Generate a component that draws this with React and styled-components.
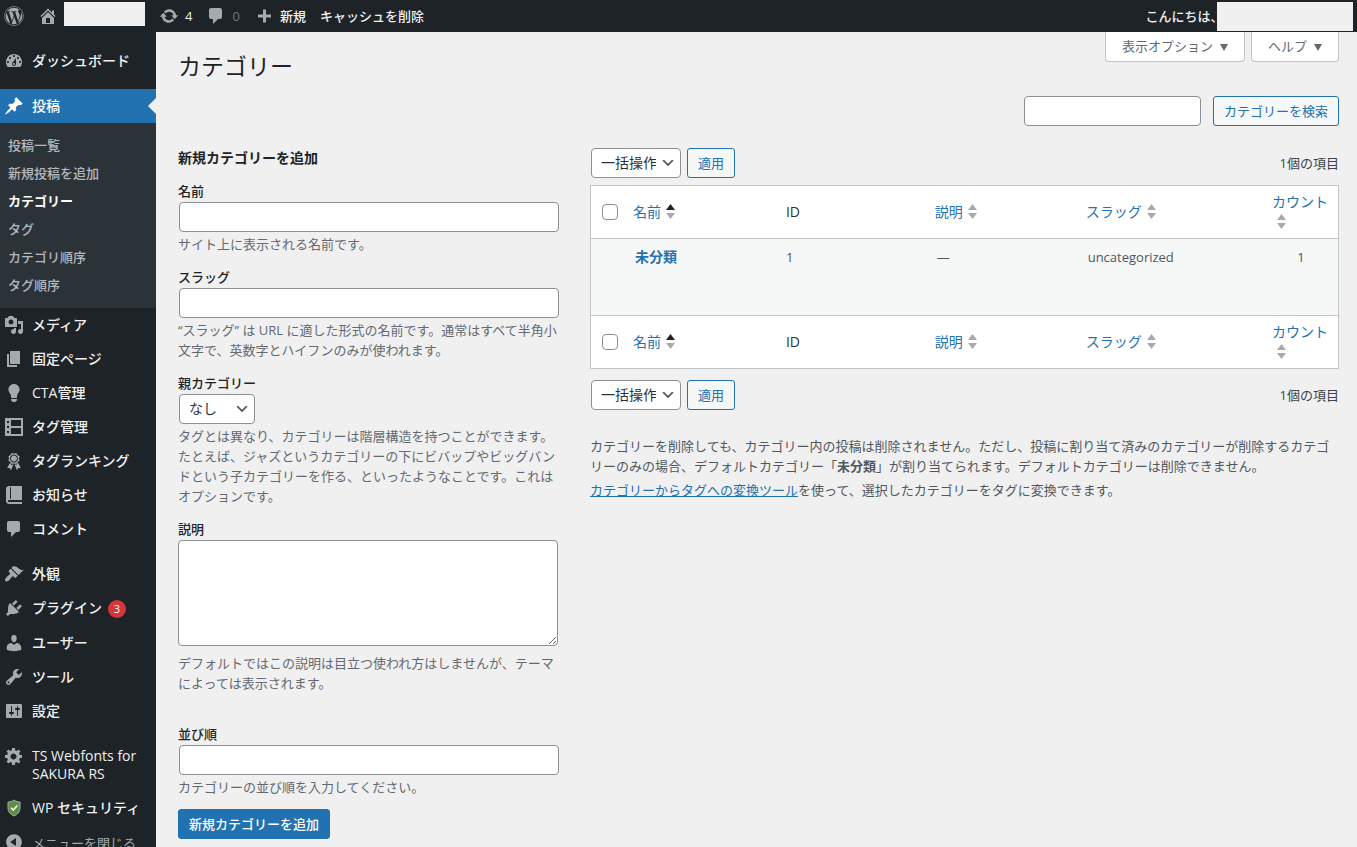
import React from "react";
import styled, { createGlobalStyle, css } from "styled-components";
import { FaWordpress } from "react-icons/fa";

const GlobalStyle = createGlobalStyle`
    *, *::before, *::after {
        box-sizing: border-box;
    }
    body {
        margin: 0;
        background: #f0f0f0;
        color: #3c434a;
        font-family: "Open Sans", "Noto Sans CJK JP", sans-serif;
        font-size: 13px;
        line-height: 20px;
    }
    button, input, select, textarea {
        font-family: inherit;
    }
    a {
        color: #2271b1;
    }
`;

const Shell = styled.div`
    display: flex;
    flex-direction: column;
    height: 100vh;
    overflow: hidden;
`;
const Icon = styled.svg`
    width: 20px;
    height: 20px;
    flex: none;
    fill: #a7aaad;
`;

/* top bar */
const AdminBar = styled.header`
    display: flex;
    flex: none;
    justify-content: space-between;
    height: 32px;
    padding: 0 4px;
    background: #1d2327;
`;
const BarGroup = styled.div`
    display: flex;
    align-items: center;
    gap: ${(props) => props.$gap || 0}px;
`;
const BarLink = styled.a`
    display: flex;
    align-items: center;
    gap: 6px;
    height: 32px;
    color: ${(props) => (props.$muted ? "#72777c" : "#f0f0f1")};
    font-weight: 500;
    font-feature-settings: "halt";
    text-decoration: none;

    ${Icon} {
        fill: #a7aaad;
        color: #a7aaad;
    }
`;
const Mask = styled.span`
    align-self: flex-start;
    width: ${(props) => props.$width}px;
    height: ${(props) => props.$height}px;
    margin-top: 2px;
    background: #f0f0f0;
`;

/* side menu */
const Body = styled.div`
    display: flex;
    flex: 1;
    min-height: 0;
`;
const Side = styled.nav`
    display: flex;
    flex: none;
    flex-direction: column;
    width: 156px;
    padding-top: 12px;
    background: #1d2327;
    overflow: hidden;
`;
const MenuLink = styled.a`
    position: relative;
    display: flex;
    flex: none;
    align-items: flex-start;
    gap: 8px;
    min-height: 34px;
    margin-top: ${(props) => (props.$spaced ? 11 : 0)}px;
    padding: 8px 0 8px 4px;
    color: #f0f0f1;
    font-size: 14px;
    font-weight: 500;
    line-height: 18px;
    text-decoration: none;

    ${Icon} {
        margin: -1px 0;
    }
    ${(props) =>
        props.$active &&
        css`
            background: #2271b1;
            color: #fff;

            ${Icon} {
                fill: #fff;
            }
            &::after {
                content: "";
                position: absolute;
                top: 9px;
                right: 0;
                border: 8px solid transparent;
                border-left: 0;
                border-right-color: #f0f0f0;
            }
        `}
`;
const LatinLabel = styled.span`
    font-weight: 400;
`;
const Bubble = styled.span`
    display: inline-block;
    min-width: 18px;
    margin-left: 6px;
    border-radius: 9px;
    background: #d63638;
    color: #fff;
    font-size: 11px;
    font-weight: 400;
    text-align: center;
`;
const SubMenu = styled.div`
    display: flex;
    flex: none;
    flex-direction: column;
    padding: 8px 0 9px;
    background: #2c3338;
`;
const SubLink = styled.a`
    padding: 4px 8px;
    color: ${(props) => (props.$current ? "#fff" : "#b4b9be")};
    font-weight: ${(props) => (props.$current ? 700 : 500)};
    text-decoration: none;
`;
const Collapse = styled.button`
    display: flex;
    flex: none;
    align-items: center;
    gap: 8px;
    height: 34px;
    padding: 0 0 0 4px;
    border: 0;
    background: none;
    color: #a7aaad;
    font-size: 13px;
    text-align: left;
    white-space: nowrap;
`;

/* content */
const Main = styled.main`
    flex: 1;
    min-width: 0;
    padding: 0 18px 0 22px;
`;
const TopRow = styled.div`
    display: flex;
    align-items: flex-start;
    justify-content: space-between;
    height: 64px;
`;
const Title = styled.h1`
    margin: 0;
    padding-top: 19px;
    color: #1d2327;
    font-size: 23px;
    font-weight: 400;
    line-height: 30px;
`;
const ScreenTabs = styled.div`
    display: flex;
    gap: 6px;
`;
const ScreenTab = styled.button`
    height: 30px;
    padding: 0 16px 2px;
    border: 1px solid #c3c4c7;
    border-top: 0;
    border-radius: 0 0 4px 4px;
    background: #fff;
    color: #646970;
    font-size: 13px;

    &::after {
        content: "";
        display: inline-block;
        margin-left: 7px;
        border: 4px solid transparent;
        border-top: 7px solid #646970;
        border-bottom: 0;
    }
`;
const SearchRow = styled.form`
    display: flex;
    justify-content: flex-end;
    gap: 12px;
    margin-bottom: 22px;
`;
const control = css`
    height: 30px;
    border: 1px solid #8c8f94;
    border-radius: 4px;
    background: #fff;
    color: #2c3338;
    font-size: 14px;
`;
const SearchInput = styled.input`
    ${control}
    width: 177px;
`;
const Button = styled.button`
    height: 30px;
    padding: 0 10px 2px;
    border: 1px solid #2271b1;
    border-radius: 3px;
    background: ${(props) => (props.$primary ? "#2271b1" : "#f6f7f7")};
    color: ${(props) => (props.$primary ? "#fff" : "#2271b1")};
    font-size: 13px;
    font-weight: ${(props) => (props.$primary ? 500 : 400)};
`;
const Columns = styled.div`
    display: grid;
    grid-template-columns: minmax(0, 34fr) minmax(0, 67fr);
    gap: 32px;
    align-items: start;
`;

/* add form */
const AddForm = styled.form`
    display: flex;
    flex-direction: column;
    gap: 12px;
`;
const FormTitle = styled.h2`
    margin: 0;
    color: #1d2327;
    font-size: 14px;
    font-weight: 700;
`;
const Field = styled.div`
    margin-top: ${(props) => (props.$spaced ? 18 : 0)}px;
`;
const Label = styled.label`
    display: block;
    color: #1d2327;
    font-weight: 500;
    line-height: 22px;
`;
const TextInput = styled.input`
    ${control}
    display: block;
    width: 100%;
    margin: 0 1px;
`;
const TextArea = styled.textarea`
    ${control}
    display: block;
    width: 100%;
    height: 106px;
    margin-bottom: 7px;
`;
const Help = styled.p`
    margin: 2px 0 0;
    color: #646970;
`;
const SelectWrap = styled.span`
    position: relative;
    display: inline-block;
    margin: 0 1px;
    vertical-align: top;

    ${Icon} {
        position: absolute;
        top: 7px;
        right: 5px;
        width: 16px;
        height: 16px;
        fill: #50575e;
        pointer-events: none;
    }
`;
const Select = styled.select`
    ${control}
    display: block;
    width: ${(props) => props.$width}px;
    padding: 0 24px 2px 9px;
    appearance: none;
`;

/* list */
const TableNav = styled.div`
    display: flex;
    align-items: center;
    gap: 5px;
`;
const Count = styled.span`
    margin-left: auto;
`;
const Table = styled.table`
    width: 100%;
    margin: 7px 0 11px;
    border: 1px solid #c3c4c7;
    border-spacing: 0;
    table-layout: fixed;
    background: #fff;
    color: #2c3338;
    font-size: 14px;
`;
const HeadCell = styled.th`
    width: ${(props) => props.$width || "auto"};
    height: 53px;
    padding: 0 ${(props) => (props.$plain ? 10 : 8)}px;
    font-weight: 400;
    text-align: left;
    vertical-align: middle;

    thead & {
        border-bottom: 1px solid #c3c4c7;
    }
    tfoot & {
        border-top: 1px solid #c3c4c7;
    }
`;
const CheckCell = styled(HeadCell)`
    padding: 0 0 0 11px;
`;
const CheckBox = styled.input`
    display: block;
    width: 16px;
    height: 16px;
    margin: 0;
    border: 1px solid #8c8f94;
    border-radius: 4px;
    background: #fff;
    appearance: none;
`;
const SortLink = styled.a`
    text-decoration: none;
`;
const Arrows = styled.svg`
    width: 9px;
    height: 15px;
    margin-left: 5px;
    vertical-align: -2px;
    fill: #a7aaad;
`;
const Cell = styled.td`
    height: 76px;
    padding: 8px 10px;
    background: #f6f7f7;
    color: #50575e;
    font-size: 13px;
    text-align: ${(props) => (props.$center ? "center" : "left")};
    vertical-align: top;
`;
const RowTitle = styled.a`
    font-size: 14px;
    font-weight: 700;
    text-decoration: none;
`;
const Notes = styled.div`
    margin-top: 26px;
    color: #50575e;
`;
const Note = styled.p`
    margin: 0 0 4px;
`;

const icons = {
    dashboard:
        "M3.76 16h12.48c1.1-1.37 1.76-3.11 1.76-5 0-4.42-3.58-8-8-8s-8 3.58-8 8c0 1.89.66 3.63 1.76 5zM10 4c.55 0 1 .45 1 1s-.45 1-1 1-1-.45-1-1 .45-1 1-1zM6 6c.55 0 1 .45 1 1s-.45 1-1 1-1-.45-1-1 .45-1 1-1zm8 0c.55 0 1 .45 1 1s-.45 1-1 1-1-.45-1-1 .45-1 1-1zm-5.37 5.55L12 7v6c0 1.1-.9 2-2 2s-2-.9-2-2c0-.57.24-1.08.63-1.45zM4 10c.55 0 1 .45 1 1s-.45 1-1 1-1-.45-1-1 .45-1 1-1zm12 0c.55 0 1 .45 1 1s-.45 1-1 1-1-.45-1-1 .45-1 1-1zm-5 3c0-.55-.45-1-1-1s-1 .45-1 1 .45 1 1 1 1-.45 1-1z",
    pin: "M10.44 3.02l1.82-1.82 6.36 6.35-1.83 1.82c-1.05-.68-2.48-.57-3.41.36l-.75.75c-.92.93-1.04 2.35-.35 3.41l-1.83 1.82-2.41-2.41-2.8 2.79c-.42.42-3.38 2.71-3.8 2.29s1.86-3.39 2.28-3.81l2.79-2.79L4.1 9.36l1.83-1.82c1.05.69 2.48.57 3.4-.36l.75-.75c.93-.92 1.05-2.35.36-3.41z",
    home: "M16 8.5l1.53 1.53-1.06 1.06L10 4.6l-6.47 6.49-1.06-1.06L10 2.5l4 4v-2h2v4zm-6-2.46l6 5.99V18H4v-5.97zM12 17v-5H8v5h4z",
    update: "M10.2 3.28c3.53 0 6.43 2.61 6.92 6h2.08l-3.5 4-3.5-4h2.32c-.45-1.97-2.21-3.45-4.32-3.45-1.45 0-2.73.71-3.54 1.78L4.95 5.66C6.23 4.2 8.11 3.28 10.2 3.28zm-.4 13.44c-3.52 0-6.43-2.61-6.92-6H.8l3.5-4c1.17 1.33 2.33 2.67 3.5 4H5.48c.45 1.97 2.21 3.45 4.32 3.45 1.45 0 2.73-.71 3.54-1.78l1.71 1.95c-1.28 1.46-3.15 2.38-5.25 2.38z",
    comment:
        "M5 2h9c1.1 0 2 .9 2 2v7c0 1.1-.9 2-2 2h-2l-5 5v-5H5c-1.1 0-2-.9-2-2V4c0-1.1.9-2 2-2z",
    plus: "M17 8.5v3h-5v5H9v-5H4v-3h5v-5h3v5z",
    media: "M13 11V4c0-.55-.45-1-1-1h-1.67L9 1H5L3.67 3H2c-.55 0-1 .45-1 1v7c0 .55.45 1 1 1h10c.55 0 1-.45 1-1zM7 4.5c1.38 0 2.5 1.12 2.5 2.5S8.38 9.5 7 9.5 4.5 8.38 4.5 7 5.62 4.5 7 4.5zM14 6h5v10.5c0 1.38-1.12 2.5-2.5 2.5S14 17.88 14 16.5s1.12-2.5 2.5-2.5c.17 0 .34.02.5.05V9h-3V6zm-4 8.05V13h2v3.5c0 1.38-1.12 2.5-2.5 2.5S7 17.88 7 16.5 8.12 14 9.5 14c.17 0 .34.02.5.05z",
    page: "M6 15V2h10v13H6zm-1 1h8v2H3V5h2v11z",
    bulb: "M10 1c3.11 0 5.63 2.52 5.63 5.62 0 1.84-2.03 4.58-2.03 4.58-.33.44-.6 1.25-.6 1.8v1c0 .55-.45 1-1 1H8c-.55 0-1-.45-1-1v-1c0-.55-.27-1.36-.6-1.8 0 0-2.02-2.74-2.02-4.58C4.38 3.52 6.89 1 10 1zM7 16.87V16h6v.87c0 .62-.13 1.13-.75 1.13H12c0 .62-.4 1-1.02 1h-2c-.61 0-.98-.38-.98-1h-.25c-.62 0-.75-.51-.75-1.13z",
    layout: "M1 1h18v18H1zM7 3v6h10V3zM7 11v6h10v-6zM3 4v2h2V4zM3 9v2h2V9zM3 14v2h2v-2z",
    award: "M4.46 5.16L5 7.46l-.54 2.29 2.01 1.24L7.7 13l2.3-.54 2.3.54 1.23-2.01 2.01-1.24L15 7.46l.54-2.3-2-1.24-1.24-2.01-2.3.55-2.29-.54-1.25 2zm5.55 6.34c-2.21 0-4-1.79-4-4s1.79-4 4-4 4 1.79 4 4-1.79 4-4 4zm-.02-1C8.33 10.5 7 9.16 7 7.5c0-1.65 1.33-3 2.99-3S13 5.85 13 7.5c0 1.66-1.35 3-3.01 3zm3.84 1.1l-1.28 2.24-2.08-.47L13 19.2l1.4-2.2h2.5zm-7.7.07l1.25 2.25 2.13-.51L7 19.2 5.6 17H3.1z",
    book: "M5 17h13v2H5c-1.66 0-3-1.34-3-3V4c0-1.66 1.34-3 3-3h13v14H5c-.55 0-1 .45-1 1s.45 1 1 1zm2-3.5v-11c0-.28-.22-.5-.5-.5s-.5.22-.5.5v11c0 .28.22.5.5.5s.5-.22.5-.5z",
    brush: "M14.48 11.06L7.41 3.99l1.5-1.5c.5-.56 2.3-.47 3.51.32 1.21.8 1.43 1.28 2.91 2.1 1.18.64 2.45 1.26 4.45.85zm-.71.71L6.7 4.7 4.93 6.47c-.39.39-.39 1.02 0 1.41l1.06 1.06c.39.39.39 1.03 0 1.42-.6.6-1.43 1.11-2.21 1.69-.35.26-.7.53-1.01.84C1.43 14.23.4 16.08 1.4 17.07c.99 1 2.84-.03 4.18-1.36.31-.31.58-.66.85-1.02.57-.78 1.08-1.61 1.69-2.21.39-.39 1.02-.39 1.41 0l1.06 1.06c.39.39 1.02.39 1.41 0z",
    plug: "M13.11 4.36L9.87 7.6 8 5.73l3.24-3.24c.35-.34 1.05-.2 1.56.32.52.51.66 1.21.31 1.55zm-8 1.77l.91-1.12 9.01 9.01-1.19.84c-.71.71-2.63 1.16-3.82 1.16H6.14L4.9 17.26c-.59.59-1.54.59-2.12 0-.59-.58-.59-1.53 0-2.12l1.24-1.24v-3.88c0-1.13.4-3.19 1.09-3.89zm7.26 3.97l3.24-3.24c.34-.35 1.04-.21 1.55.31.52.51.66 1.21.31 1.55l-3.24 3.25z",
    user: "M10 9.25c-2.27 0-2.73-3.44-2.73-3.44C7 4.02 7.82 2 9.97 2c2.16 0 2.98 2.02 2.71 3.81 0 0-.41 3.44-2.68 3.44zm0 2.57L12.72 10c2.39 0 4.52 2.33 4.52 4.53v2.49s-3.65 1.13-7.24 1.13c-3.65 0-7.24-1.13-7.24-1.13v-2.49c0-2.25 1.94-4.48 4.47-4.48z",
    wrench: "M16.68 9.77c-1.34 1.34-3.3 1.67-4.95.99l-5.41 6.52c-.99.99-2.59.99-3.58 0s-.99-2.59 0-3.57l6.52-5.42c-.68-1.65-.35-3.61.99-4.95 1.28-1.28 3.12-1.62 4.72-1.06l-2.89 2.89 2.82 2.82 2.86-2.87c.53 1.58.18 3.39-1.08 4.65zM3.81 16.21c.4.39 1.04.39 1.43 0 .4-.4.4-1.04 0-1.43-.39-.4-1.03-.4-1.43 0-.39.39-.39 1.03 0 1.43z",
    sliders:
        "M18 16V4c0-.55-.45-1-1-1H3c-.55 0-1 .45-1 1v12c0 .55.45 1 1 1h14c.55 0 1-.45 1-1zM8 11h1c.55 0 1 .45 1 1s-.45 1-1 1H8v1.5c0 .28-.22.5-.5.5s-.5-.22-.5-.5V13H6c-.55 0-1-.45-1-1s.45-1 1-1h1V5.5c0-.28.22-.5.5-.5s.5.22.5.5V11zm5-2h-1c-.55 0-1-.45-1-1s.45-1 1-1h1V5.5c0-.28.22-.5.5-.5s.5.22.5.5V7h1c.55 0 1 .45 1 1s-.45 1-1 1h-1v5.5c0 .28-.22.5-.5.5s-.5-.22-.5-.5V9z",
    gear: "M18 12h-2.18c-.17.7-.44 1.35-.81 1.93l1.54 1.54-2.1 2.1-1.54-1.54c-.58.36-1.23.63-1.91.79V19H8v-2.18c-.68-.16-1.33-.43-1.91-.79l-1.54 1.54-2.12-2.12 1.54-1.54c-.36-.58-.63-1.23-.79-1.91H1V9.03h2.17c.16-.7.44-1.35.8-1.94L2.43 5.55l2.1-2.1 1.54 1.54c.58-.37 1.24-.64 1.93-.81V2h3v2.18c.68.16 1.33.43 1.91.79l1.54-1.54 2.12 2.12-1.54 1.54c.36.59.64 1.24.8 1.94H18V12zm-8.5 1.5c1.66 0 3-1.34 3-3s-1.34-3-3-3-3 1.34-3 3 1.34 3 3 3z",
    collapse:
        "M10 2.16c4.33 0 7.84 3.51 7.84 7.84s-3.51 7.84-7.84 7.84S2.16 14.33 2.16 10 5.71 2.16 10 2.16zm2 11.72V6.12L6.18 9.97z",
    chevron: "M5 6l5 5 5-5 2 1-7 7-7-7 2-1z",
};

function Dashicon({ name }) {
    return (
        <Icon viewBox="0 0 20 20" aria-hidden="true">
            <path fillRule="evenodd" d={icons[name]} />
        </Icon>
    );
}

function ShieldIcon() {
    return (
        <Icon viewBox="0 0 20 20" aria-hidden="true">
            <path
                d="M10 2c2 1.5 4 2 6 2v6c0 4-2.5 6.500-6 8-3.500-1.500-6-4-6-8V4c2 0 4-.5 6-2z"
                fill="#5b8f43"
                stroke="#a7aaad"
                strokeWidth="1"
            />
            <path
                d="M7 9.8l2.3 2.3L13.3 7.5"
                fill="none"
                stroke="#fff"
                strokeWidth="1.5"
            />
        </Icon>
    );
}

const subItems = [
    "投稿一覧",
    "新規投稿を追加",
    "カテゴリー",
    "タグ",
    "カテゴリ順序",
    "タグ順序",
];
const menuItems = [
    { icon: "media", label: "メディア" },
    { icon: "page", label: "固定ページ" },
    { icon: "bulb", label: "CTA管理" },
    { icon: "layout", label: "タグ管理" },
    { icon: "award", label: "タグランキング" },
    { icon: "book", label: "お知らせ" },
    { icon: "comment", label: "コメント" },
    { icon: "brush", label: "外観", spaced: true },
    { icon: "plug", label: "プラグイン", count: 3 },
    { icon: "user", label: "ユーザー" },
    { icon: "wrench", label: "ツール" },
    { icon: "sliders", label: "設定" },
];

function SideMenu() {
    return (
        <Side>
            <MenuLink href="#dashboard">
                <Dashicon name="dashboard" />
                ダッシュボード
            </MenuLink>
            <MenuLink href="#posts" $spaced $active>
                <Dashicon name="pin" />
                投稿
            </MenuLink>
            <SubMenu>
                {subItems.map((item) => (
                    <SubLink
                        key={item}
                        href="#sub"
                        $current={item === "カテゴリー"}
                    >
                        {item}
                    </SubLink>
                ))}
            </SubMenu>
            {menuItems.map((item) => (
                <MenuLink key={item.label} href="#menu" $spaced={item.spaced}>
                    <Dashicon name={item.icon} />
                    <span>
                        {item.label}
                        {item.count && <Bubble>{item.count}</Bubble>}
                    </span>
                </MenuLink>
            ))}
            <MenuLink href="#webfonts" $spaced>
                <Dashicon name="gear" />
                <LatinLabel>TS Webfonts for SAKURA RS</LatinLabel>
            </MenuLink>
            <MenuLink href="#security">
                <ShieldIcon />
                <span>WP セキュリティ</span>
            </MenuLink>
            <Collapse type="button">
                <Dashicon name="collapse" />
                メニューを閉じる
            </Collapse>
        </Side>
    );
}

function SelectBox({ id, label, options, width }) {
    return (
        <SelectWrap>
            <Select id={id} aria-label={label} $width={width}>
                {options.map((option) => (
                    <option key={option}>{option}</option>
                ))}
            </Select>
            <Dashicon name="chevron" />
        </SelectWrap>
    );
}

function BulkActions() {
    return (
        <TableNav>
            <SelectBox label="一括操作" options={["一括操作", "削除"]} width={90} />
            <Button type="button">適用</Button>
            <Count>1個の項目</Count>
        </TableNav>
    );
}

function SortHeader({ label, asc, width }) {
    return (
        <HeadCell $width={width}>
            <SortLink href="#sort">
                {label}
                <Arrows viewBox="0 0 9 15" aria-hidden="true">
                    <path d="M4.5 0L9 6H0z" fill={asc ? "#1d2327" : undefined} />
                    <path d="M0 9h9l-4.5 6z" />
                </Arrows>
            </SortLink>
        </HeadCell>
    );
}

function HeaderRow() {
    return (
        <tr>
            <CheckCell $width="34px">
                <CheckBox type="checkbox" aria-label="すべて選択" />
            </CheckCell>
            <SortHeader label="名前" width="20.2%" asc />
            <HeadCell $width="20.2%" $plain>
                ID
            </HeadCell>
            <SortHeader label="説明" width="20.2%" />
            <SortHeader label="スラッグ" />
            <SortHeader label="カウント" width="74px" />
        </tr>
    );
}

function CategoryForm() {
    return (
        <AddForm>
            <FormTitle>新規カテゴリーを追加</FormTitle>
            <Field>
                <Label htmlFor="name">名前</Label>
                <TextInput id="name" type="text" />
                <Help>サイト上に表示される名前です。</Help>
            </Field>
            <Field>
                <Label htmlFor="slug">スラッグ</Label>
                <TextInput id="slug" type="text" />
                <Help>
                    “スラッグ” は URL
                    に適した形式の名前です。通常はすべて半角小文字で、英数字とハイフンのみが使われます。
                </Help>
            </Field>
            <Field>
                <Label htmlFor="parent">親カテゴリー</Label>
                <SelectBox id="parent" options={["なし", "未分類"]} width={76} />
                <Help>
                    タグとは異なり、カテゴリーは階層構造を持つことができます。たとえば、ジャズというカテゴリーの下にビバップやビッグバンドという子カテゴリーを作る、といったようなことです。これはオプションです。
                </Help>
            </Field>
            <Field>
                <Label htmlFor="description">説明</Label>
                <TextArea id="description" />
                <Help>
                    デフォルトではこの説明は目立つ使われ方はしませんが、テーマによっては表示されます。
                </Help>
            </Field>
            <Field $spaced>
                <Label htmlFor="order">並び順</Label>
                <TextInput id="order" type="text" />
                <Help>カテゴリーの並び順を入力してください。</Help>
            </Field>
            <div>
                <Button type="button" $primary>
                    新規カテゴリーを追加
                </Button>
            </div>
        </AddForm>
    );
}

function CategoryList() {
    return (
        <section>
            <BulkActions />
            <Table>
                <thead>
                    <HeaderRow />
                </thead>
                <tbody>
                    <tr>
                        <Cell />
                        <Cell>
                            <RowTitle href="#edit">未分類</RowTitle>
                        </Cell>
                        <Cell>1</Cell>
                        <Cell>—</Cell>
                        <Cell>uncategorized</Cell>
                        <Cell $center>1</Cell>
                    </tr>
                </tbody>
                <tfoot>
                    <HeaderRow />
                </tfoot>
            </Table>
            <BulkActions />
            <Notes>
                <Note>
                    カテゴリーを削除しても、カテゴリー内の投稿は削除されません。ただし、投稿に割り当て済みのカテゴリーが削除するカテゴリーのみの場合、デフォルトカテゴリー「
                    <strong>未分類</strong>
                    」が割り当てられます。デフォルトカテゴリーは削除できません。
                </Note>
                <Note>
                    <a href="#converter">カテゴリーからタグへの変換ツール</a>
                    を使って、選択したカテゴリーをタグに変換できます。
                </Note>
            </Notes>
        </section>
    );
}

function App() {
    return (
        <>
            <GlobalStyle />
            <Shell>
                <AdminBar>
                    <BarGroup $gap={14}>
                        <BarLink href="#wp" aria-label="WordPress">
                            <Icon as={FaWordpress} />
                        </BarLink>
                        <BarLink href="#home" aria-label="サイト">
                            <Dashicon name="home" />
                            <Mask $width={81} $height={24} />
                        </BarLink>
                        <BarLink href="#updates">
                            <Dashicon name="update" />4
                        </BarLink>
                        <BarLink href="#comments" $muted>
                            <Dashicon name="comment" />0
                        </BarLink>
                        <BarLink href="#new">
                            <Dashicon name="plus" />
                            新規
                        </BarLink>
                        <BarLink href="#cache">キャッシュを削除</BarLink>
                    </BarGroup>
                    <BarGroup>
                        <BarLink href="#profile">こんにちは、</BarLink>
                        <Mask $width={136} $height={29} />
                    </BarGroup>
                </AdminBar>
                <Body>
                    <SideMenu />
                    <Main>
                        <TopRow>
                            <Title>カテゴリー</Title>
                            <ScreenTabs>
                                <ScreenTab type="button">表示オプション</ScreenTab>
                                <ScreenTab type="button">ヘルプ</ScreenTab>
                            </ScreenTabs>
                        </TopRow>
                        <SearchRow>
                            <SearchInput type="search" aria-label="カテゴリーを検索" />
                            <Button type="button">カテゴリーを検索</Button>
                        </SearchRow>
                        <Columns>
                            <CategoryForm />
                            <CategoryList />
                        </Columns>
                    </Main>
                </Body>
            </Shell>
        </>
    );
}

export default App;
